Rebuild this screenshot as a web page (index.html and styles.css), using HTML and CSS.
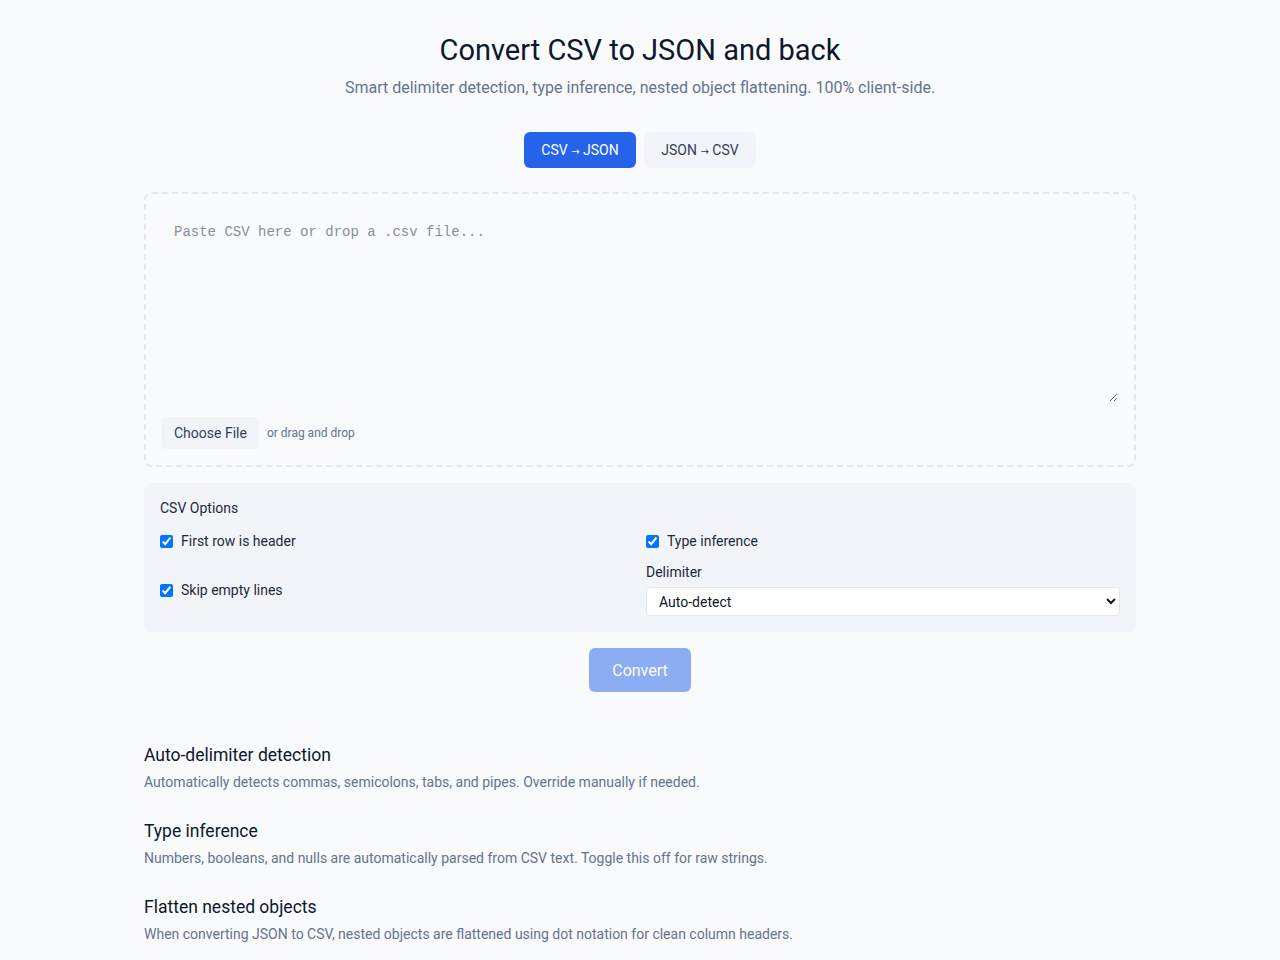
FILE: index.html
```html
<!DOCTYPE html>
<html lang="en">
<head>
  <meta charset="UTF-8">
  <meta name="viewport" content="width=device-width, initial-scale=1.0">
  <title>CSV to JSON Converter</title>
  <link rel="stylesheet" href="styles.css">
</head>
<body>
  <main class="page">
    <header class="hero">
      <h1>Convert CSV to JSON and back</h1>
      <p>Smart delimiter detection, type inference, nested object flattening. 100% client-side.</p>
    </header>

    <div class="tabs">
      <button class="tab active">CSV <span class="arrow">→</span> JSON</button>
      <button class="tab">JSON <span class="arrow">→</span> CSV</button>
    </div>

    <div class="dropzone">
      <textarea class="input" placeholder="Paste CSV here or drop a .csv file..."></textarea>
      <div class="file-row">
        <span class="file-btn">Choose File</span>
        <span class="file-hint">or drag and drop</span>
      </div>
    </div>

    <section class="options">
      <div class="options-title">CSV Options</div>
      <div class="options-grid">
        <label class="check"><input type="checkbox" checked> First row is header</label>
        <label class="check"><input type="checkbox" checked> Type inference</label>
        <label class="check"><input type="checkbox" checked> Skip empty lines</label>
        <div class="field">
          <label class="field-label">Delimiter</label>
          <select class="select">
            <option>Auto-detect</option>
          </select>
        </div>
      </div>
    </section>

    <div class="actions">
      <button class="convert" disabled>Convert</button>
    </div>

    <section class="features">
      <div class="feature">
        <h3>Auto-delimiter detection</h3>
        <p>Automatically detects commas, semicolons, tabs, and pipes. Override manually if needed.</p>
      </div>
      <div class="feature">
        <h3>Type inference</h3>
        <p>Numbers, booleans, and nulls are automatically parsed from CSV text. Toggle this off for raw strings.</p>
      </div>
      <div class="feature">
        <h3>Flatten nested objects</h3>
        <p>When converting JSON to CSV, nested objects are flattened using dot notation for clean column headers.</p>
      </div>
    </section>
  </main>
</body>
</html>
```

FILE: styles.css
```css
* {
  box-sizing: border-box;
}
body {
  margin: 0;
  background: #f8fafc;
  color: #0f172a;
  font-family: Roboto, "Noto Sans", sans-serif;
}
.page {
  width: 992px;
  margin: 0 auto;
  padding-top: 30px;
}
.hero {
  text-align: center;
}
.hero h1 {
  margin: 0;
  font-size: 29px;
  font-weight: 400;
  line-height: 40px;
}
.hero p {
  margin: 6px 0 0;
  font-size: 16px;
  color: #64748b;
  line-height: 24px;
}
.tabs {
  display: flex;
  justify-content: center;
  gap: 8px;
  margin-top: 32px;
}
.tab {
  font-family: inherit;
  font-size: 14px;
  height: 36px;
  width: 112px;
  border: none;
  border-radius: 6px;
  background: #f1f5f9;
  color: #334155;
}
.tab.active {
  background: #2563eb;
  color: #fff;
}
.arrow {
  font-family: "DejaVu Sans", sans-serif;
  font-size: 10px;
}
.dropzone {
  margin-top: 24px;
  border: 2px dashed #e2e8f0;
  border-radius: 8px;
  padding: 16px 16px 16px;
}
.input {
  display: block;
  width: 100%;
  height: 192px;
  padding: 14px 12px 12px;
  border: none;
  background: transparent;
  font-family: "Liberation Mono", monospace;
  font-size: 14px;
  color: #0f172a;
  resize: vertical;
  outline: none;
}
.input::placeholder {
  color: #8a8f98;
}
.file-row {
  display: flex;
  align-items: center;
  gap: 8px;
  margin-top: 15px;
}
.file-btn {
  background: #f1f5f9;
  border-radius: 4px;
  padding: 0 12px;
  height: 32px;
  line-height: 32px;
  font-size: 14px;
  color: #334155;
}
.file-hint {
  font-size: 12px;
  color: #64748b;
}
.options {
  margin-top: 16px;
  background: #f1f5f9;
  border-radius: 8px;
  padding: 16px;
}
.options-title {
  font-size: 14px;
  color: #1e293b;
  line-height: 18px;
}
.options-grid {
  display: grid;
  grid-template-columns: 1fr 1fr;
  gap: 13px 12px;
  align-items: center;
  margin-top: 14px;
}
.check {
  display: flex;
  align-items: center;
  gap: 8px;
  font-size: 14px;
  color: #1e293b;
  line-height: 20px;
}
.check input {
  margin: 0;
  width: 13px;
  height: 13px;
}
.field-label {
  display: block;
  font-size: 14px;
  color: #1e293b;
  margin-bottom: 7px;
}
.select {
  width: 100%;
  height: 29px;
  font-family: inherit;
  font-size: 14px;
  padding: 0 8px;
  border: 1px solid #e2e8f0;
  border-radius: 4px;
  background: #fff;
  color: #0f172a;
}
.actions {
  display: flex;
  justify-content: center;
  margin-top: 16px;
}
.convert {
  font-family: inherit;
  font-size: 16px;
  padding: 0 23px;
  height: 44px;
  border: none;
  border-radius: 6px;
  background: #2563eb;
  color: #fff;
  opacity: 0.5;
}
.features {
  margin-top: 49px;
}
.feature {
  margin-bottom: 25px;
}
.feature h3 {
  margin: 0;
  font-size: 17.5px;
  font-weight: 400;
  line-height: 28px;
}
.feature p {
  margin: 3px 0 0;
  font-size: 14px;
  color: #64748b;
  line-height: 20px;
}
```
